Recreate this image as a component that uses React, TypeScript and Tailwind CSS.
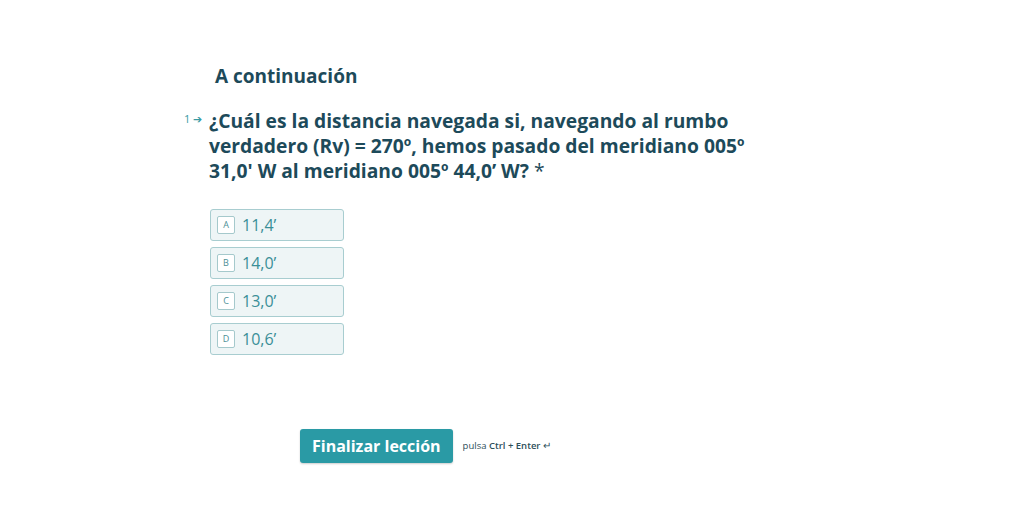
import React from "react";

const options = [
  { k: "A", v: "11,4’" },
  { k: "B", v: "14,0’" },
  { k: "C", v: "13,0’" },
  { k: "D", v: "10,6’" },
];

export default function App() {
  return (
    <div
      className="w-[1024px] h-[514px] bg-white overflow-hidden"
      style={{ fontFamily: '"Open Sans", "Noto Sans", sans-serif' }}
    >
      <div className="pl-[215px] pt-[64px]">
        <h2 className="text-[19px] leading-[24px] font-bold text-[#1d4a5a]">A continuación</h2>
      </div>
      <div className="flex mt-[20px] pl-[184px]">
        <div className="w-[25px] flex items-start pt-[5px] text-[11px] leading-[12px] text-[#3a9aa3]">
          <span>1</span>
          <span className="ml-[3px] text-[11px]">➔</span>
        </div>
        <div className="w-[560px]">
          <p className="text-[19.25px] leading-[25px] font-bold text-[#1d4a5a]">
            ¿Cuál es la distancia navegada si, navegando al rumbo verdadero (Rv) = 270º, hemos pasado del meridiano 005º 31,0' W al meridiano 005º 44,0’ W? <span className="font-normal">*</span>
          </p>
          <div className="mt-[26px] flex flex-col gap-[6px] pl-[1px]">
            {options.map((o) => (
              <div
                key={o.k}
                className="w-[134px] h-[32px] flex items-center gap-[7px] px-[6px] rounded-[3px] border border-[#a8cdd0] bg-[#eef5f6]"
              >
                <span className="w-[18px] h-[18px] flex items-center justify-center border border-[#a5c9cc] bg-white text-[9px] text-[#4d8f96] rounded-[2px]">
                  {o.k}
                </span>
                <span className="text-[16px] text-[#3a8f98]">{o.v}</span>
              </div>
            ))}
          </div>
        </div>
      </div>
      <div className="flex items-center pl-[300px] mt-[74px]">
        <button className="h-[34px] px-[12px] rounded-[3px] bg-[#2a9aa5] text-white text-[16px] font-bold shadow-[0_1px_2px_rgba(0,0,0,0.2)]">
          Finalizar lección
        </button>
        <span className="ml-[10px] text-[9.5px] text-[#2d4f5a]">
          pulsa <span className="font-semibold">Ctrl + Enter</span> ↵
        </span>
      </div>
    </div>
  );
}
